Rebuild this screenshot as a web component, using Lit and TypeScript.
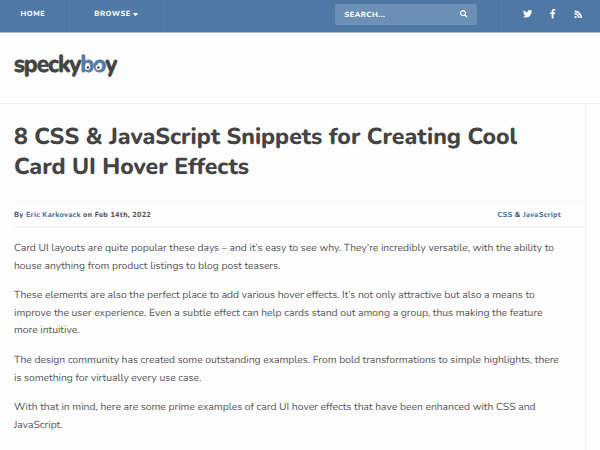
import { LitElement, html, css, svg } from "lit";
import { customElement } from "lit/decorators.js";

const paragraphs: string[][] = [
  [
    "Card UI layouts are quite popular these days – and it’s easy to see why. They’re incredibly versatile, with the ability to",
    "house anything from product listings to blog post teasers.",
  ],
  [
    "These elements are also the perfect place to add various hover effects. It’s not only attractive but also a means to",
    "improve the user experience. Even a subtle effect can help cards stand out among a group, thus making the feature",
    "more intuitive.",
  ],
  [
    "The design community has created some outstanding examples. From bold transformations to simple highlights, there",
    "is something for virtually every use case.",
  ],
  [
    "With that in mind, here are some prime examples of card UI hover effects that have been enhanced with CSS and",
    "JavaScript.",
  ],
];

const icons = {
  search: svg`<path d="M505 442.700L405.300 343c-4.500-4.500-10.600-7-17-7H372c27.600-35.300 44-79.700 44-128C416 93.100 322.900 0 208 0S0 93.100 0 208s93.100 208 208 208c48.300 0 92.700-16.400 128-44v16.300c0 6.400 2.500 12.500 7 17l99.700 99.700c9.400 9.400 24.600 9.400 33.900 0l28.300-28.300c9.400-9.400 9.400-24.600.1-34zM208 336c-70.700 0-128-57.200-128-128 0-70.700 57.200-128 128-128 70.700 0 128 57.200 128 128 0 70.700-57.200 128-128 128z"/>`,
  twitter: svg`<path d="M459.370 151.716c.325 4.548.325 9.097.325 13.645 0 138.720-105.583 298.558-298.558 298.558-59.452 0-114.680-17.219-161.137-47.106 8.447.974 16.568 1.299 25.340 1.299 49.055 0 94.213-16.568 130.274-44.832-46.132-.975-84.792-31.188-98.112-72.772 6.498.974 12.995 1.624 19.818 1.624 9.421 0 18.843-1.300 27.614-3.573-48.081-9.747-84.143-51.980-84.143-102.985v-1.299c13.969 7.797 30.214 12.670 47.431 13.319-28.264-18.843-46.781-51.005-46.781-87.391 0-19.492 5.197-37.360 14.294-52.954 51.655 63.675 129.300 105.258 216.365 109.807-1.624-7.797-2.599-15.918-2.599-24.040 0-57.828 46.782-104.934 104.934-104.934 30.213 0 57.502 12.670 76.670 33.137 23.715-4.548 46.456-13.320 66.599-25.340-7.798 24.366-24.366 44.833-46.132 57.827 21.117-2.273 41.584-8.122 60.426-16.243-14.292 20.791-32.161 39.308-52.628 54.253z"/>`,
  facebook: svg`<path d="M375 288l14.200-92.700h-88.900v-60.100c0-25.300 12.400-50.100 52.200-50.100H393V6.300S356.300 0 321.300 0c-73.200 0-121.100 44.400-121.100 124.700v70.600H119V288h81.200v224h100.100V288z"/>`,
  rss: svg`<circle cx="96" cy="416" r="64"/><path d="M32 176v72c0 13 10 23 23 24 99 7 178 86 185 185 1 13 11 23 24 23h48c14 0 25-12 24-26C326 303 209 186 58 176c-14-1-26 10-26 0zM32 56v48c0 13 10 24 23 24 182 8 322 154 329 329 1 13 11 23 24 23h48c14 0 25-11 24-25C471 229 284 40 57 32c-14-1-25 10-25 24z"/>`,
};

@customElement("app-root")
class AppRoot extends LitElement {
  static styles = css`
    :host {
      display: block;
      height: 450px;
      overflow: hidden;
      background: #fdfdfd;
      color: #555;
      font-family: Nunito, Lato, "Open Sans", sans-serif;
      text-rendering: geometricPrecision;
      white-space: nowrap;
    }
    * { box-sizing: border-box; }
    .bar {
      display: flex;
      height: 33px;
      background: #4f78a5;
      border-bottom: 1px solid #a7bbd2;
      color: #fff;
      font-size: 7.4px;
      font-weight: 800;
      letter-spacing: 0.52px;
      line-height: 29px;
    }
    .item { display: flex; border-right: 1px solid #557da9; }
    .home { width: 70px; padding-left: 20.5px; }
    .browse { width: 94px; padding-left: 24.3px; gap: 2.7px; }
    .caret-icon { width: 5px; height: 3px; margin-top: 13px; }
    .finder { flex: 1; display: flex; justify-content: flex-end; padding: 4px 24px 0 0; border-right: 1px solid #557da9; }
    .search {
      display: flex; justify-content: space-between; align-items: center;
      width: 142px; height: 21px; padding: 0 10px 0 9.5px;
      border-radius: 2px; background: #6b8fb5; line-height: 20px;
    }
    .social { width: 98px; display: flex; align-items: center; padding: 0 0 4px 20.5px; }
    svg { display: block; fill: currentColor; }
    .twitter { width: 9.4px; height: 9.4px; }
    .facebook { width: 9.4px; height: 9.4px; margin-left: 16px; }
    .rss { width: 8.6px; height: 8.6px; margin-left: 16.3px; }
    .glass { width: 7.5px; height: 7.5px; margin-bottom: 1px; }
    .brand { height: 71px; border-bottom: 1px solid #f0f0f0; padding: 15px 0 0 14px; }
    .logo { overflow: visible; font-weight: 800; font-size: 24.5px; letter-spacing: -1.2px; fill: #444; stroke: #444; stroke-width: 0.4px; }
    .logo .blue { fill: #557da7; stroke: #557da7; }
    .logo .white { fill: #fff; stroke: none; }
    .logo .pupil { stroke: none; }
    .article { width: 586px; height: 346px; border-right: 1px solid #f0f0f0; padding-left: 14px; }
    .title { margin: 0; padding-top: 19px; height: 97px; color: #444; font-size: 23.04px; font-weight: 800; line-height: 30px; }
    .meta {
      display: flex; justify-content: space-between; height: 27px; padding-right: 24px;
      border-top: 1px solid #f0f0f0; border-bottom: 2px solid #f5f5f5;
      font-size: 7.3px; font-weight: 800; letter-spacing: 0.3px; line-height: 26px;
    }
    .link { color: #4f78a5; }
    .copy { padding-top: 12px; font-size: 10.32px; line-height: 17.6px; }
    .para { margin: 0 0 12px; }
  `;

  icon(name: keyof typeof icons, cls: string) {
    return html`<svg class=${cls} viewBox="0 0 512 512">${icons[name]}</svg>`;
  }

  render() {
    return html`
      <nav class="bar">
        <div class="item home">HOME</div>
        <div class="item browse">BROWSE
          <svg class="caret-icon" viewBox="0 0 10 6"><path d="M1 0h8q1 .6.5 1.300L5.800 5.500q-.8.7-1.600 0L.5 1.300Q0 .6 1 0z" /></svg>
        </div>
        <div class="finder">
          <div class="search"><span>SEARCH...</span>${this.icon("search", "glass")}</div>
        </div>
        <div class="social">
          ${this.icon("twitter", "twitter")}${this.icon("facebook", "facebook")}${this.icon("rss", "rss")}
        </div>
      </nav>
      <header class="brand">
        <svg class="logo" width="103" height="32">
          <text x="-0.3" y="24.4" textLength="102.500" lengthAdjust="spacingAndGlyphs">specky<tspan class="blue">bo</tspan>y</text>
          <circle class="white" cx="73.600" cy="19.300" r="2.600" /><circle class="white" cx="84.300" cy="19.300" r="2.600" />
          <circle class="pupil" cx="73.900" cy="19.500" r="1.200" /><circle class="pupil" cx="84.300" cy="19.500" r="1.200" />
        </svg>
      </header>
      <main class="article">
        <h1 class="title">8 CSS &amp; JavaScript Snippets for Creating Cool<br />Card UI Hover Effects</h1>
        <div class="meta">
          <span>By <span class="link">Eric Karkovack</span> on Feb 14th, 2022</span>
          <span><span class="link">CSS</span> &amp; <span class="link">JavaScript</span></span>
        </div>
        <div class="copy">
          ${paragraphs.map((lines) => html`<p class="para">${lines.map((text, i) => (i ? html`<br />${text}` : text))}</p>`)}
        </div>
      </main>
    `;
  }
}
